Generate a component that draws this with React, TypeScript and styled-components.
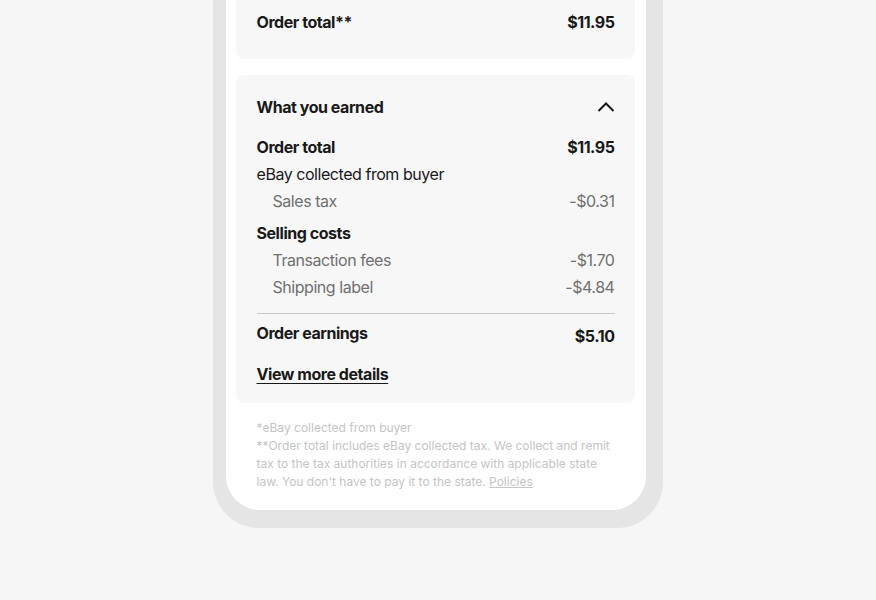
import styled, { createGlobalStyle } from "styled-components";

const GlobalStyle = createGlobalStyle`
  html, body {
    margin: 0;
    padding: 0;
    background: #f6f6f6;
    font-family: Inter, "Liberation Sans", Arial, sans-serif;
    color: #191919;
  }
`;

const Page = styled.div`
  width: 876px;
  height: 600px;
  overflow: hidden;
  display: flex;
  justify-content: center;
`;

const Phone = styled.div`
  margin-top: -40px;
  margin-right: 1px;
  width: 450px;
  height: 568px;
  box-sizing: border-box;
  background: #e5e5e5;
  border-radius: 0 0 46px 46px;
  padding: 0 17px 18px 13px;
`;

const Screen = styled.div`
  height: 100%;
  background: #fff;
  border-radius: 0 0 34px 34px;
  padding: 0 11px 0 10px;
  box-sizing: border-box;
  display: flex;
  flex-direction: column;
  gap: 16px;
`;

const Card = styled.section<{ $top?: boolean }>`
  background: #f7f7f7;
  border-radius: ${(p) => (p.$top ? "0 0 8px 8px" : "8px")};
  padding: ${(p) => (p.$top ? "49px 20px 23px 21px" : "20px 20px 17px 21px")};
`;

const Row = styled.div<{ $sub?: boolean; $gap?: number; $drop?: boolean }>`
  display: flex;
  justify-content: space-between;
  align-items: ${(p) => (p.$drop ? "flex-start" : "baseline")};
  font-size: 16px;
  line-height: 27px;
  padding-left: ${(p) => (p.$sub ? "16px" : "0")};
  color: ${(p) => (p.$sub ? "#707070" : "#191919")};
  margin-top: ${(p) => p.$gap ?? 0}px;
`;

const Label = styled.span<{ $bold?: boolean }>`
  font-weight: ${(p) => (p.$bold ? 700 : 400)};
  letter-spacing: -0.45px;
`;

const Value = styled.span<{ $bold?: boolean; $drop?: boolean }>`
  font-weight: ${(p) => (p.$bold ? 700 : 400)};
  letter-spacing: -0.45px;
  margin-top: ${(p) => (p.$drop ? "3px" : "0")};
`;

const Header = styled.div`
  display: flex;
  justify-content: space-between;
  align-items: center;
  height: 24px;
  margin-bottom: 15px;
  font-size: 16px;
  font-weight: 700;
  letter-spacing: -0.45px;
`;

const Divider = styled.hr`
  border: none;
  border-top: 1px solid #c7c7c7;
  margin: 12px 0 6px;
`;

const MoreLink = styled.a`
  display: inline-block;
  margin-top: 12px;
  font-size: 16px;
  line-height: 24px;
  font-weight: 700;
  color: #191919;
  text-decoration: underline;
  text-underline-offset: 3px;
  letter-spacing: -0.45px;
`;

const Notes = styled.div`
  padding: 0 21px;
  font-size: 12px;
  line-height: 18px;
  color: #c4c4c4;
  white-space: nowrap;

  a {
    color: inherit;
    text-decoration: underline;
  }
`;

const Chevron = () => (
  <svg width="18" height="12" viewBox="0 0 18 12" fill="none">
    <path d="M1.5 10 L9 2.5 L16.5 10" stroke="#191919" strokeWidth="2" />
  </svg>
);

export default function App() {
  return (
    <Page>
      <GlobalStyle />
      <Phone>
        <Screen>
          <Card $top>
            <Row>
              <Label $bold>Order total**</Label>
              <Value $bold>$11.95</Value>
            </Row>
          </Card>

          <Card>
            <Header>
              <span>What you earned</span>
              <Chevron />
            </Header>
            <Row>
              <Label $bold>Order total</Label>
              <Value $bold>$11.95</Value>
            </Row>
            <Row>
              <Label>eBay collected from buyer</Label>
            </Row>
            <Row $sub>
              <Label>Sales tax</Label>
              <Value>-$0.31</Value>
            </Row>
            <Row $gap={5}>
              <Label $bold>Selling costs</Label>
            </Row>
            <Row $sub>
              <Label>Transaction fees</Label>
              <Value>-$1.70</Value>
            </Row>
            <Row $sub>
              <Label>Shipping label</Label>
              <Value>-$4.84</Value>
            </Row>
            <Divider />
            <Row $drop>
              <Label $bold>Order earnings</Label>
              <Value $bold $drop>$5.10</Value>
            </Row>
            <MoreLink href="#">View more details</MoreLink>
          </Card>

          <Notes>
            *eBay collected from buyer
            <br />
            **Order total includes eBay collected tax. We collect and remit
            <br />
            tax to the tax authorities in accordance with applicable state
            <br />
            law. You don't have to pay it to the state. <a href="#">Policies</a>
          </Notes>
        </Screen>
      </Phone>
    </Page>
  );
}
